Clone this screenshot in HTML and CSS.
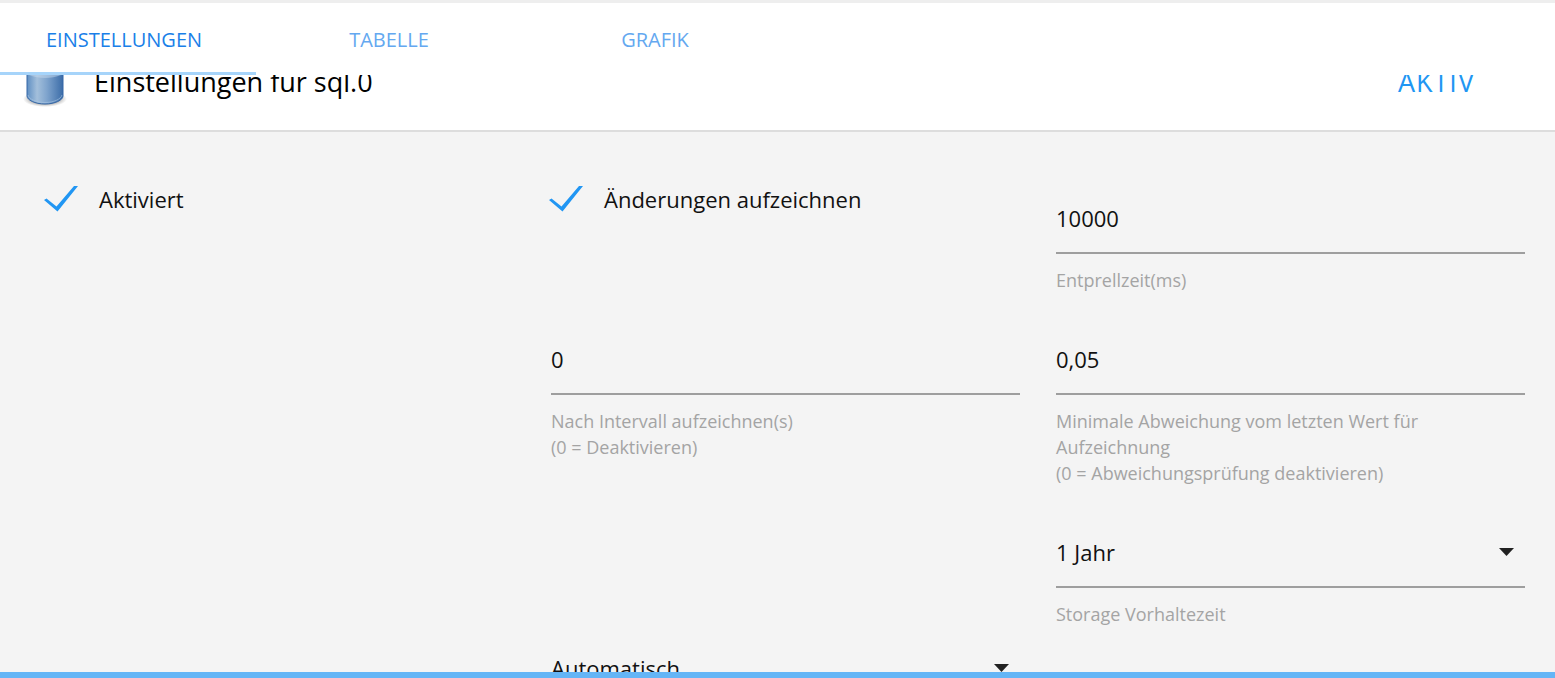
FILE: index.html
```html
<!DOCTYPE html>
<html lang="de">
<head>
<meta charset="utf-8">
<meta name="viewport" content="width=device-width, initial-scale=1">
<title>Einstellungen für sql.0</title>
<link rel="stylesheet" href="styles.css">
</head>
<body>
<nav class="tabs">
  <a class="tab tab-active" href="#einstellungen">EINSTELLUNGEN</a>
  <a class="tab" href="#tabelle">TABELLE</a>
  <a class="tab" href="#grafik">GRAFIK</a>
</nav>

<main class="page" id="einstellungen">
  <header class="panel-header">
    <svg class="db-icon" width="48" height="56" viewBox="0 0 48 56" aria-hidden="true">
      <defs>
        <linearGradient id="body" x1="0" x2="1" y1="0" y2="0">
          <stop offset="0" stop-color="#5f8fc3"/>
          <stop offset="0.28" stop-color="#a3bfdb"/>
          <stop offset="0.55" stop-color="#7fa4cd"/>
          <stop offset="1" stop-color="#3b6ca8"/>
        </linearGradient>
        <radialGradient id="shade">
          <stop offset="0.6" stop-color="#555" stop-opacity="0.5"/>
          <stop offset="1" stop-color="#777" stop-opacity="0"/>
        </radialGradient>
      </defs>
      <ellipse cx="24" cy="46" rx="22" ry="8" fill="url(#shade)"/>
      <path d="M6 8V43C6 47 14 51 24 51S42 47 42 43V8Z" fill="url(#body)" stroke="#3567a6"/>
      <path d="M7 42C8 46 15 49.500 24 49.500S40 46 41 42" fill="none" stroke="#a9c5e3" stroke-opacity=".6"/>
      <path d="M8 22C17 26 31 26 40 22V20H8Z" fill="#c5d9ed" opacity=".5"/>
      <ellipse cx="24" cy="9" rx="18" ry="6" fill="#b7d0ea" stroke="#3567a6"/>
    </svg>
    <h1 class="title">Einstellungen für sql.0</h1>
    <button class="state" type="button">AKTIV</button>
  </header>

  <form class="form">
    <div class="row">
      <label class="check">
        <input class="check-input" type="checkbox" checked>
        <svg class="check-mark" width="36" height="28" viewBox="0 0 36 28" aria-hidden="true"><path d="M1 15 3.500 13.500 13.500 21.500 31 1H35L14.500 26.500Z" fill="#2196f3"/></svg>
        <span>Aktiviert</span>
      </label>
      <label class="check">
        <input class="check-input" type="checkbox" checked>
        <svg class="check-mark" width="36" height="28" viewBox="0 0 36 28" aria-hidden="true"><path d="M1 15 3.500 13.500 13.500 21.500 31 1H35L14.500 26.500Z" fill="#2196f3"/></svg>
        <span>Änderungen aufzeichnen</span>
      </label>
      <div class="field">
        <input class="control" id="debounce" type="text" value="10000">
        <label class="hint" for="debounce">Entprellzeit(ms)</label>
      </div>
    </div>

    <div class="row">
      <div class="field field-second">
        <input class="control" id="interval" type="text" value="0">
        <label class="hint" for="interval">Nach Intervall aufzeichnen(s)<br>(0 = Deaktivieren)</label>
      </div>
      <div class="field">
        <input class="control" id="delta" type="text" value="0,05">
        <label class="hint" for="delta">Minimale Abweichung vom letzten Wert für Aufzeichnung<br>(0 = Abweichungsprüfung deaktivieren)</label>
      </div>
    </div>

    <div class="row row-tight">
      <div class="field">
        <div class="select">
          <select class="control" id="retention"><option>1 Jahr</option></select>
          <svg class="caret" width="16" height="8" viewBox="0 0 16 8" aria-hidden="true"><path d="M0 0H15L7.500 8Z" fill="#212121"/></svg>
        </div>
        <label class="hint" for="retention">Storage Vorhaltezeit</label>
      </div>
    </div>

    <div class="row">
      <div class="field field-second">
        <div class="select">
          <select class="control" aria-label="Datentyp"><option>Automatisch</option></select>
          <svg class="caret" width="16" height="8" viewBox="0 0 16 8" aria-hidden="true"><path d="M0 0H15L7.500 8Z" fill="#212121"/></svg>
        </div>
      </div>
    </div>
  </form>
</main>
<footer class="bottom-bar"></footer>
</body>
</html>
```
FILE: styles.css
```css
* {
  box-sizing: border-box;
}

body {
  margin: 0;
  background: #f4f4f4;
  color: #111;
  font-family: "Segoe UI", "Open Sans", "Noto Sans", sans-serif;
  font-size: 22px;
}

.tabs {
  position: fixed;
  top: 0;
  left: 0;
  right: 0;
  z-index: 2;
  display: flex;
  height: 75px;
  border-top: 3px solid #eee;
  background: #fff;
}

.tab {
  display: flex;
  flex: 0 0 266px;
  align-items: center;
  justify-content: center;
  padding-top: 4px;
  border-bottom: 3px solid transparent;
  color: #64a8f0;
  font-size: 20px;
  text-decoration: none;
}

.tab-active {
  flex-basis: 256px;
  justify-content: flex-start;
  padding-left: 46px;
  border-bottom-color: #a6d4fa;
  color: #1a7fe8;
}

.page {
  height: 100vh;
  padding-top: 32px;
  overflow: hidden;
}

.panel-header {
  display: flex;
  align-items: center;
  height: 100px;
  padding: 0 80px 0 21px;
  border-bottom: 2px solid #ddd;
  background: #fff;
}

.title {
  flex: 1;
  margin: 0 0 0 25px;
  color: #000;
  font-size: 27px;
  font-weight: 400;
}

.state {
  padding: 0;
  border: 0;
  background: none;
  color: #2196f3;
  font: inherit;
  font-size: 27px;
  letter-spacing: 1px;
}

.form {
  padding: 52px 30px 0 46px;
}

.row {
  display: grid;
  grid-template-columns: repeat(3, 1fr);
  column-gap: 36px;
  padding-bottom: 32px;
}

.row-tight {
  padding-bottom: 7px;
}

.field {
  grid-column: 3;
}

.field-second {
  grid-column: 2;
}

.check {
  position: relative;
  display: flex;
  align-items: center;
  align-self: start;
  height: 30px;
}

.check-input {
  position: absolute;
  opacity: 0;
}

.check-mark {
  margin: 0 20px 0 -3px;
}

.control {
  display: block;
  width: 100%;
  height: 70px;
  padding: 0;
  border: 0;
  border-bottom: 2px solid #9e9e9e;
  border-radius: 0;
  outline: 0;
  background: none;
  color: #111;
  font: inherit;
  appearance: none;
}

.select {
  position: relative;
}

.caret {
  position: absolute;
  top: 30px;
  right: 10px;
  pointer-events: none;
}

.hint {
  display: block;
  margin-top: 13px;
  color: #a4a4a4;
  font-size: 18px;
  line-height: 26px;
}

.bottom-bar {
  position: fixed;
  right: 0;
  bottom: 0;
  left: 0;
  height: 6px;
  background: #64b5f6;
}
```
